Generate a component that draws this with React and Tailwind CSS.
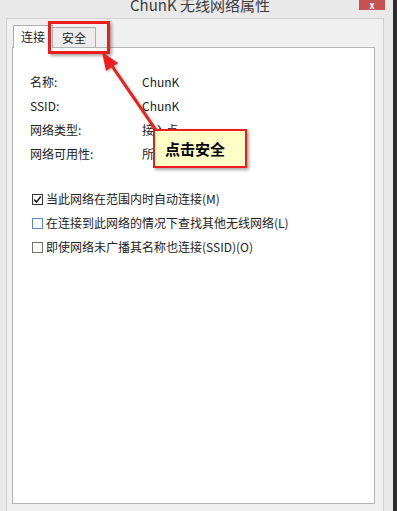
import React from 'react';

const font = { fontFamily: '"Noto Sans CJK SC", "Noto Sans", sans-serif' };

function Checkbox({ checked, tone }) {
  const border =
    tone === 'blue' ? 'border-[#5b87c4]' : tone === 'dark' ? 'border-[#333333]' : 'border-[#707070]';
  return (
    <span className={`w-[11px] h-[11px] border ${border} bg-white flex items-center justify-center shrink-0`}>
      {checked && (
        <svg width="9" height="9" viewBox="0 0 9 9">
          <path d="M1.2 4.6 L3.5 7 L7.8 1.6" fill="none" stroke="#222" strokeWidth="1.6" />
        </svg>
      )}
    </span>
  );
}

function App() {
  const fields = [
    ['名称:', 'ChunK'],
    ['SSID:', 'ChunK'],
    ['网络类型:', '接入点'],
    ['网络可用性:', '所有用户'],
  ];
  const options = [
    { text: '当此网络在范围内时自动连接(M)', checked: true, tone: 'dark' },
    { text: '在连接到此网络的情况下查找其他无线网络(L)', checked: false, tone: 'blue' },
    { text: '即使网络未广播其名称也连接(SSID)(O)', checked: false, tone: 'gray' },
  ];

  return (
    <div className="relative w-[397px] h-[511px] overflow-hidden flex bg-[#2d2d2d] text-[#222]" style={font}>
      <div className="w-[393px] h-full flex flex-col bg-[#e9e9e9]">
        {/* title bar */}
        <div className="h-[18px] shrink-0 flex items-start justify-center relative overflow-hidden">
          <span className="text-[15px] leading-[15px] -mt-[3px] text-[#3c3c3c] ml-[7px]">ChunK 无线网络属性</span>
          <div className="absolute right-[8px] top-0 w-[26px] h-[10px] bg-[#c75050] flex items-end justify-center">
            <span className="text-white text-[9px] leading-[9px] font-bold">x</span>
          </div>
        </div>

        {/* client area */}
        <div className="flex-1 flex pl-[6px] pr-[8px]">
          <div className="flex-1 flex flex-col border-l border-t border-r border-[#d2d2d2] bg-[#f0f0f0] pl-[5px] pr-[8px] pt-[6px]">
            {/* tabs */}
            <div className="flex items-end h-[23px] pl-[1px] relative z-10">
              <div className="w-[40px] h-[23px] bg-white border-l border-t border-r border-[#adadad] flex items-start justify-center pt-[4px]">
                <span className="text-[12px] leading-[14px]">连接</span>
              </div>
              <div className="w-[43px] h-[20px] bg-[#ececec] border-t border-r border-[#adadad] mb-[1px] flex items-start justify-center pt-[3px]">
                <span className="text-[12px] leading-[14px]">安全</span>
              </div>
            </div>

            {/* panel */}
            <div className="-mt-[1px] h-[457px] bg-white border border-[#b4b4b4] pt-[22px] pl-[17px]">
              <div className="flex flex-col">
                {fields.map(([label, value]) => (
                  <div key={label} className="flex h-[24px] items-center text-[12px]">
                    <span className="w-[112px]">{label}</span>
                    <span>{value}</span>
                  </div>
                ))}
              </div>
              <div className="flex flex-col mt-[21px] pl-[2px]">
                {options.map((o) => (
                  <div key={o.text} className="flex h-[24px] items-center gap-[3px] text-[12px]">
                    <Checkbox checked={o.checked} tone={o.tone} />
                    <span>{o.text}</span>
                  </div>
                ))}
              </div>
            </div>
          </div>
          <div className="w-[1px]" />
        </div>
      </div>
      <div className="w-[4px] h-full bg-[#2d2d2d]" />

      {/* annotation: red highlight around the tab */}
      <div className="absolute left-[48px] top-[21px] w-[62px] h-[33px] border-[3px] border-[#ee1c1c] shadow-[2px_2px_3px_rgba(0,0,0,0.35)] z-20" />

      {/* annotation: arrow */}
      <svg className="absolute left-0 top-0 z-20" width="397" height="511" style={{ filter: 'drop-shadow(1px 1px 1px rgba(0,0,0,0.3))' }}>
        <line x1="112" y1="66" x2="160" y2="136" stroke="#ee1c1c" strokeWidth="3" />
        <polygon points="102,52 118,63 106,71" fill="#ee1c1c" />
      </svg>

      {/* annotation: callout */}
      <div className="absolute left-[153px] top-[129px] w-[94px] h-[39px] bg-[#ffffc8] border-2 border-[#ee1c1c] shadow-[2px_2px_3px_rgba(0,0,0,0.35)] z-30 flex items-center pl-[10px]">
        <span className="text-[15px] font-bold text-black leading-none">点击安全</span>
      </div>
    </div>
  );
}

export default App;
